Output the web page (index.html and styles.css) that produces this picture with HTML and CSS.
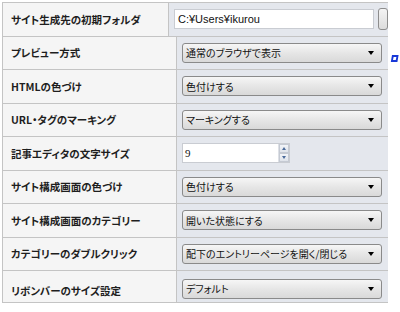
FILE: index.html
```html
<!DOCTYPE html>
<html lang="ja">

<head>
  <meta charset="UTF-8">
  <title>オプション</title>
  <link rel="stylesheet" href="styles.css">
</head>

<body>

  <div id="content">
    <div id="options">

      <div class="row">
        <div class="label">サイト生成先の初期フォルダ</div>
        <div class="value">
          <div class="text-field">C:¥Users¥ikurou</div>
          <div class="browse-button"></div>
        </div>
      </div>

      <div class="row">
        <div class="label">プレビュー方式</div>
        <div class="value">
          <div class="combo">通常のブラウザで表示<span class="arrow"></span></div>
        </div>
      </div>

      <div class="row">
        <div class="label">HTMLの色づけ</div>
        <div class="value">
          <div class="combo">色付けする<span class="arrow"></span></div>
        </div>
      </div>

      <div class="row">
        <div class="label">URL・タグのマーキング</div>
        <div class="value">
          <div class="combo">マーキングする<span class="arrow"></span></div>
        </div>
      </div>

      <div class="row">
        <div class="label">記事エディタの文字サイズ</div>
        <div class="value">
          <div class="spinner">
            <div class="spinner-text">9</div>
            <div class="spinner-buttons">
              <span class="spin up"></span>
              <span class="spin down"></span>
            </div>
          </div>
        </div>
      </div>

      <div class="row">
        <div class="label">サイト構成画面の色づけ</div>
        <div class="value">
          <div class="combo">色付けする<span class="arrow"></span></div>
        </div>
      </div>

      <div class="row">
        <div class="label">サイト構成画面のカテゴリー</div>
        <div class="value">
          <div class="combo">開いた状態にする<span class="arrow"></span></div>
        </div>
      </div>

      <div class="row">
        <div class="label">カテゴリーのダブルクリック</div>
        <div class="value">
          <div class="combo">配下のエントリーページを開く/閉じる<span class="arrow"></span></div>
        </div>
      </div>

      <div class="row last">
        <div class="label">リボンバーのサイズ設定</div>
        <div class="value">
          <div class="combo">デフォルト<span class="arrow"></span></div>
        </div>
      </div>

    </div>

    <div id="side">
      <svg class="side-mark" width="9" height="9" viewBox="0 0 9 9">
        <path d="M2 1 H8.6 L7.4 8 H0.8 Z M3.6 3 L3 6 H5.8 L6.4 3 Z" fill="#1838d8" fill-rule="evenodd" />
      </svg>
    </div>
  </div>

</body>

</html>
```

FILE: styles.css
```css
* {
  margin: 0;
  padding: 0;
  box-sizing: border-box;
  font-family: 'Noto Sans CJK JP', 'Liberation Sans', sans-serif;
  font-feature-settings: "palt";
}

html,
body {
  height: 100%;
  background-color: #fff;
}

#content {
  display: flex;
  flex-direction: row;
  padding: 2px 0 0 2px;
}

#options {
  width: 386px;
  border-top: 1px solid #c4c4c4;
  border-left: 1px solid #c4c4c4;
  display: flex;
  flex-direction: column;
  overflow: hidden;
}

.row {
  display: flex;
  flex-direction: row;
  height: 33.5px;
  border-bottom: 1px solid #c4c4c4;
}

.row.last {
  height: 32px;
}

.row.last .value {
  padding-top: 4px;
}

.label {
  width: 174px;
  display: flex;
  align-items: center;
  padding-left: 8px;
  background-color: #f5f5f5;
  border-right: 1px solid #c4c4c4;
  font-size: 10.5px;
  font-weight: bold;
  color: #1e1e1e;
}

.row.last .label {
  padding-top: 8px;
}

.value {
  flex: 1;
  display: flex;
  align-items: center;
  padding-left: 5px;
  background-color: #e4e7ed;
}

.text-field {
  width: 200px;
  height: 20px;
  display: flex;
  align-items: center;
  padding-left: 3px;
  background-color: #fff;
  border: 1px solid #c9ccd2;
  font-family: 'Liberation Sans', sans-serif;
  font-size: 11px;
  color: #111;
}

.browse-button {
  width: 10px;
  height: 22px;
  margin-left: 4px;
  border: 1px solid #8d8d8d;
  border-radius: 3px;
  background: linear-gradient(#f4f4f4, #dcdcdc);
  flex-shrink: 0;
}

.combo {
  position: relative;
  width: 200px;
  height: 20px;
  display: flex;
  align-items: center;
  padding-left: 3px;
  border: 1px solid #8a8a8a;
  border-radius: 3px;
  background: linear-gradient(#f6f6f6, #e6e6e6 50%, #d9d9d9);
  font-size: 10px;
  color: #111;
  white-space: nowrap;
  overflow: hidden;
}

.arrow {
  position: absolute;
  right: 7px;
  top: 7px;
  width: 0;
  height: 0;
  border-left: 3.5px solid transparent;
  border-right: 3.5px solid transparent;
  border-top: 4px solid #000;
}

.spinner {
  width: 108px;
  height: 20px;
  display: flex;
  flex-direction: row;
  background-color: #fff;
  border: 1px solid #c9ccd2;
}

.spinner-text {
  flex: 1;
  padding-left: 2px;
  font-family: 'Liberation Serif', serif;
  font-size: 11px;
  line-height: 18px;
  color: #111;
}

.spinner-buttons {
  width: 11px;
  display: flex;
  flex-direction: column;
  border-left: 1px solid #dde0e6;
}

.spin {
  flex: 1;
  position: relative;
  background: linear-gradient(#f2f4f8, #dfe3ea);
  border: 1px solid #c5cad3;
}

.spin.up::after,
.spin.down::after {
  content: '';
  position: absolute;
  left: 2px;
  width: 0;
  height: 0;
  border-left: 2.5px solid transparent;
  border-right: 2.5px solid transparent;
}

.spin.up::after {
  top: 2px;
  border-bottom: 3px solid #4a6a9a;
}

.spin.down::after {
  top: 2px;
  border-top: 3px solid #4a6a9a;
}

#side {
  padding: 52px 0 0 2px;
}

.side-mark {
  display: block;
}
```
